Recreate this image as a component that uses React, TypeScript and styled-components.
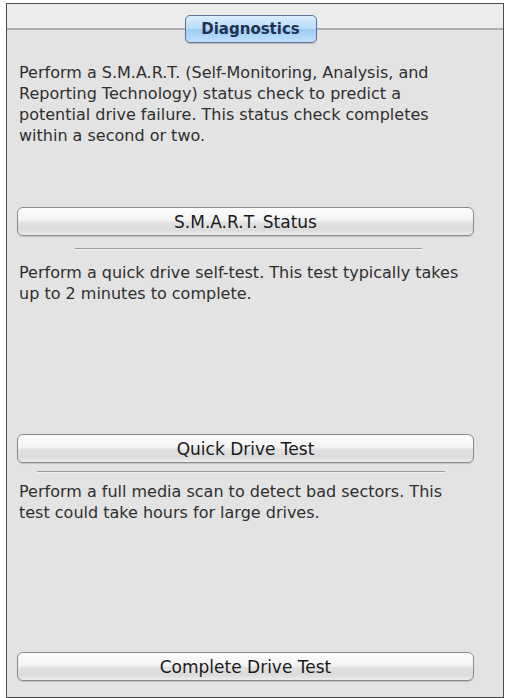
import styled, { createGlobalStyle } from "styled-components";

const GlobalStyle = createGlobalStyle`
  html, body {
    margin: 0;
    padding: 0;
    background: #ffffff;
  }
  body {
    font-family: "DejaVu Sans", "Liberation Sans", sans-serif;
    -webkit-font-smoothing: antialiased;
  }
`;

const Window = styled.div`
  box-sizing: border-box;
  margin: 3px 0 0 6px;
  width: 498px;
  height: 695px;
  border: 1px solid #4c4c4c;
  background: #e3e3e3;
  display: flex;
  flex-direction: column;
  overflow: hidden;
`;

// light strip behind the tab, cut by the groove line the tab sits on
const TabStrip = styled.div`
  display: flex;
  justify-content: center;
  align-items: flex-start;
  height: 40px;
  padding: 11px 9px 0 0;
  box-sizing: border-box;
  background: linear-gradient(
    to bottom,
    #ececec 0,
    #ececec 24px,
    #a6a6a6 24px,
    #b3b3b3 26px,
    #e3e3e3 26px
  );
`;

const Tab = styled.div`
  box-sizing: border-box;
  width: 132px;
  height: 28px;
  display: flex;
  align-items: center;
  justify-content: center;
  border: 1px solid #5a7598;
  border-radius: 5px;
  background: linear-gradient(
    to bottom,
    #dcedfd 0%,
    #b9dbf9 48%,
    #9dccf5 52%,
    #bfe0fb 100%
  );
  box-shadow: 0 1px 1px rgba(0, 0, 0, 0.18);
  color: #1e3152;
  font-size: 15px;
  font-weight: bold;
`;

const Body = styled.div`
  display: flex;
  flex-direction: column;
  padding: 0 29px 0 10px;
`;

const Section = styled.section<{ $top: number; $gap: number }>`
  display: flex;
  flex-direction: column;
  align-items: stretch;
  margin-top: ${(p) => p.$top}px;

  & > button {
    margin-top: ${(p) => p.$gap}px;
  }
`;

const Description = styled.p`
  margin: 0;
  padding-left: 2px;
  font-size: 16px;
  line-height: 21px;
  color: #2f2f2f;
`;

const Line = styled.span`
  display: block;
  white-space: nowrap;
`;

const ActionButton = styled.button`
  box-sizing: border-box;
  height: 29px;
  width: 100%;
  padding: 0;
  border: 1px solid #8a8a8a;
  border-radius: 6px;
  background: linear-gradient(
    to bottom,
    #fdfdfd 0%,
    #f3f3f3 45%,
    #e1e1e1 55%,
    #dbdbdb 80%,
    #ececec 100%
  );
  box-shadow: 0 1px 1px rgba(0, 0, 0, 0.15);
  font-family: inherit;
  font-size: 17px;
  color: #1a1a1a;
  cursor: default;
`;

const Rule = styled.hr<{ $left: number; $width: number; $top: number }>`
  margin: ${(p) => p.$top}px 0 0 ${(p) => p.$left}px;
  width: ${(p) => p.$width}px;
  height: 0;
  border: none;
  border-top: 1px solid #9c9c9c;
  border-bottom: 1px solid #f2f2f2;
`;

type Test = {
  lines: string[];
  label: string;
  top: number;
  gap: number;
  rule?: { left: number; width: number; top: number };
};

const tests: Test[] = [
  {
    lines: [
      "Perform a S.M.A.R.T. (Self-Monitoring, Analysis, and",
      "Reporting Technology) status check to predict a",
      "potential drive failure. This status check completes",
      "within a second or two.",
    ],
    label: "S.M.A.R.T. Status",
    top: 18,
    gap: 61,
    rule: { left: 58, width: 347, top: 12 },
  },
  {
    lines: [
      "Perform a quick drive self-test. This test typically takes",
      "up to 2 minutes to complete.",
    ],
    label: "Quick Drive Test",
    top: 12,
    gap: 130,
    rule: { left: 20, width: 408, top: 8 },
  },
  {
    lines: [
      "Perform a full media scan to detect bad sectors. This",
      "test could take hours for large drives.",
    ],
    label: "Complete Drive Test",
    top: 8,
    gap: 129,
  },
];

export default function App() {
  return (
    <>
      <GlobalStyle />
      <Window>
        <TabStrip>
          <Tab>Diagnostics</Tab>
        </TabStrip>
        <Body>
          {tests.map((t) => (
            <Section key={t.label} $top={t.top} $gap={t.gap}>
              <Description>
                {t.lines.map((l) => (
                  <Line key={l}>{l}</Line>
                ))}
              </Description>
              <ActionButton type="button">{t.label}</ActionButton>
              {t.rule && (
                <Rule $left={t.rule.left} $width={t.rule.width} $top={t.rule.top} />
              )}
            </Section>
          ))}
        </Body>
      </Window>
    </>
  );
}
